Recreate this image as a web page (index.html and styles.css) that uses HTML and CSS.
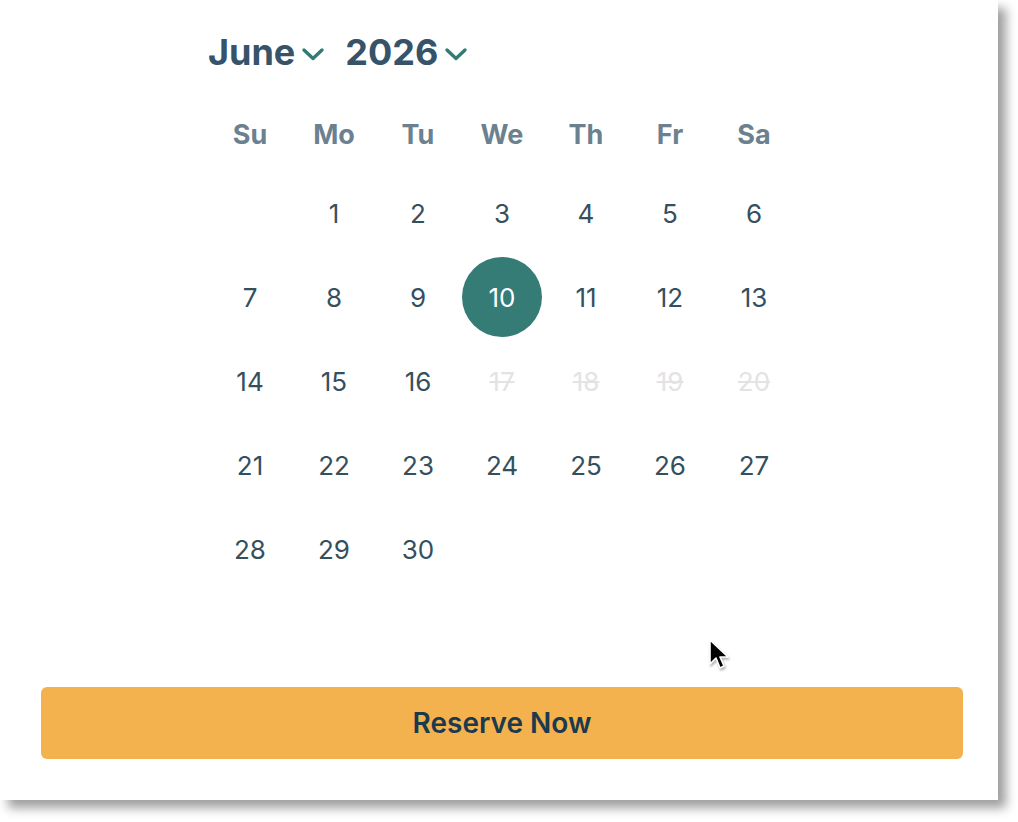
FILE: index.html
```html
<html>
    <head>
        <title>Reserve a date</title>
        <link rel="stylesheet" href="styles.css">
    </head>
    <body>
        <div class="card">
            <div class="calendar">
                <div class="picker">
                    <span class="select">June
                        <svg class="chevron" width="24" height="16" viewBox="0 0 24 16"><path d="M3 4 L12 12.5 L21 4" fill="none" stroke="#347b75" stroke-width="3.4" stroke-linecap="round" stroke-linejoin="round"/></svg>
                    </span>
                    <span class="select">2026
                        <svg class="chevron" width="24" height="16" viewBox="0 0 24 16"><path d="M3 4 L12 12.5 L21 4" fill="none" stroke="#347b75" stroke-width="3.4" stroke-linecap="round" stroke-linejoin="round"/></svg>
                    </span>
                </div>
                <div class="weekdays">
                    <div>Su</div><div>Mo</div><div>Tu</div><div>We</div><div>Th</div><div>Fr</div><div>Sa</div>
                </div>
                <div class="days">
                    <div></div>
                    <div class="day">1</div><div class="day">2</div><div class="day">3</div><div class="day">4</div><div class="day">5</div><div class="day">6</div>
                    <div class="day">7</div><div class="day">8</div><div class="day">9</div><div class="day selected">10</div><div class="day">11</div><div class="day">12</div><div class="day">13</div>
                    <div class="day">14</div><div class="day">15</div><div class="day">16</div><div class="day off">17</div><div class="day off">18</div><div class="day off">19</div><div class="day off">20</div>
                    <div class="day">21</div><div class="day">22</div><div class="day">23</div><div class="day">24</div><div class="day">25</div><div class="day">26</div><div class="day">27</div>
                    <div class="day">28</div><div class="day">29</div><div class="day">30</div>
                </div>
            </div>
            <button class="reserve">Reserve Now</button>
            <svg class="cursor" width="24" height="34" viewBox="0 0 24 34"><path d="M2 2 L2 26 L8 20 L12 30 L16 28 L12 19 L20 19 Z" fill="#000" stroke="#fff" stroke-width="1.6" stroke-linejoin="round"/></svg>
        </div>
    </body>
</html>
```

FILE: styles.css
```css
body {
    margin: 0;
    background: #fff;
    font-family: Inter, "Noto Sans", sans-serif;
}

.card {
    position: relative;
    width: 998px;
    height: 800px;
    background: #fff;
    box-shadow: 8px 8px 10px rgba(0, 0, 0, 0.38);
    box-sizing: border-box;
    padding-top: 30px;
}

.calendar {
    width: 588px;
    margin-left: 208px;
}

.picker {
    display: flex;
    gap: 20px;
    height: 44px;
    align-items: center;
    font-size: 36px;
    font-weight: 700;
    color: #36536a;
}

.select {
    display: flex;
    align-items: center;
    gap: 6px;
}

.chevron {
    margin-top: 3px;
}

.weekdays {
    display: grid;
    grid-template-columns: repeat(7, 84px);
    margin-top: 40px;
    height: 40px;
    align-items: center;
    font-size: 27px;
    font-weight: 700;
    color: #6b8190;
    text-align: center;
}

.days {
    display: grid;
    grid-template-columns: repeat(7, 84px);
    grid-auto-rows: 84px;
    margin-top: 17px;
    font-size: 26px;
    color: #34505f;
}

.day {
    display: flex;
    align-items: center;
    justify-content: center;
}

.selected {
    width: 80px;
    height: 80px;
    margin: 2px;
    border-radius: 50%;
    background: #357b76;
    color: #fff;
}

.off {
    color: #e3e3e3;
    text-decoration: line-through;
}

.reserve {
    display: block;
    width: 922px;
    height: 72px;
    margin: 96px 0 0 41px;
    border: none;
    border-radius: 6px;
    background: #f4b24f;
    font-family: Inter, "Noto Sans", sans-serif;
    font-size: 28px;
    font-weight: 600;
    color: #1c3a4d;
}

.cursor {
    position: absolute;
    left: 708px;
    top: 638px;
    filter: drop-shadow(1px 2px 1px rgba(0, 0, 0, 0.3));
}
```
